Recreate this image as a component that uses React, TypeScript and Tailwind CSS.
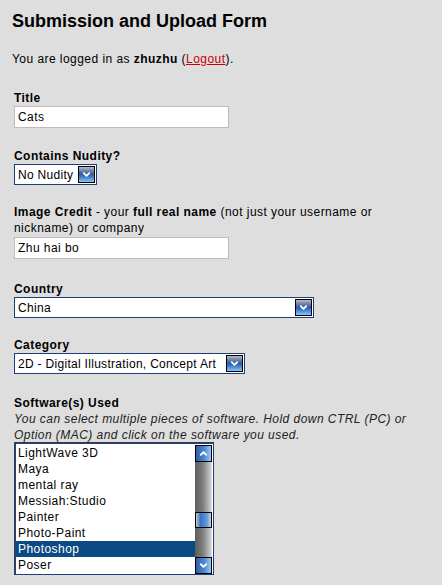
import { ChevronDown, ChevronUp } from 'lucide-react';

const software = [
  'LightWave 3D',
  'Maya',
  'mental ray',
  'Messiah:Studio',
  'Painter',
  'Photo-Paint',
  'Photoshop',
  'Poser',
];

const DropButton = () => (
  <span className="flex h-[17px] w-[17px] shrink-0 items-center justify-center border border-black bg-[linear-gradient(to_bottom,#b4bac8_0%,#7c89a8_22%,#2f5aa6_48%,#3f7ccc_66%,#8cc6f0_100%)]">
    <ChevronDown className="h-[11px] w-[11px] text-white" strokeWidth={4} />
  </span>
);

const Select = ({ value, width }: { value: string; width: string }) => (
  <div className={`flex h-[21px] items-center justify-between gap-[2px] border border-[#1f3d7a] bg-white pl-[3px] pr-[1px] ${width}`}>
    <span className="truncate tracking-[0.3px]">{value}</span>
    <DropButton />
  </div>
);

const TextInput = ({ value }: { value: string }) => (
  <div className="flex h-[22px] w-[215px] items-center border border-[#c4b8bc] bg-white px-[3px]">
    {value}
  </div>
);

const ScrollButton = ({ up }: { up?: boolean }) => (
  <span className="flex h-[17px] w-[17px] items-center justify-center border border-black bg-[linear-gradient(to_right,#2e5fa8,#4d88d2_55%,#9ccbf3)]">
    {up ? (
      <ChevronUp className="h-[11px] w-[11px] text-white" strokeWidth={4} />
    ) : (
      <ChevronDown className="h-[11px] w-[11px] text-white" strokeWidth={4} />
    )}
  </span>
);

const App = () => {
  return (
    <div className="min-h-[585px] w-[442px] bg-[#dedede] pl-[12px] pt-[11px] font-['Liberation_Sans',Arial,sans-serif] text-black">
      <h1 className="text-[18px] font-bold leading-[21px]">Submission and Upload Form</h1>

      <p className="mt-[19px] text-[12px] leading-4 tracking-[0.45px]">
        You are logged in as <b>zhuzhu</b> (
        <a className="text-[#cc0000] underline">Logout</a>).
      </p>

      <div className="mt-[23px] w-[418px] pl-[2px] text-[12px] leading-4 tracking-[0.45px]">
        {/* Title */}
        <div className="font-bold">Title</div>
        <TextInput value="Cats" />

        {/* Nudity */}
        <div className="mt-[20px] font-bold">Contains Nudity?</div>
        <div className="inline-block">
          <Select value="No Nudity" width="w-[83px]" />
        </div>

        {/* Credit */}
        <div className="mt-[19px]">
          <b>Image Credit</b> - your <b>full real name</b> (not just your username or nickname) or company
        </div>
        <div className="mt-[1px]">
          <TextInput value="Zhu hai bo" />
        </div>

        {/* Country */}
        <div className="mt-[22px] font-bold">Country</div>
        <Select value="China" width="w-[300px]" />

        {/* Category */}
        <div className="mt-[19px] font-bold">Category</div>
        <Select value="2D - Digital Illustration, Concept Art" width="w-[231px]" />

        {/* Software */}
        <div className="mt-[21px] font-bold">Software(s) Used</div>
        <div className="italic text-[#222]">
          You can select multiple pieces of software. Hold down CTRL (PC) or Option (MAC) and click on the software you used.
        </div>
        <div className="-mt-[1px] flex h-[133px] w-[200px] border border-[#1f3d7a] bg-white">
          <div className="flex flex-1 border-l border-t border-[#404040]">
            <ul className="flex-1 pt-[1px]">
              {software.map((item) => (
                <li
                  key={item}
                  className={`h-4 pl-[2px] ${item === 'Photoshop' ? 'bg-[#0c4a86] text-white' : ''}`}
                >
                  {item}
                </li>
              ))}
            </ul>
            <div className="mr-[1px] mt-[1px] flex w-[17px] flex-col">
              <ScrollButton up />
              <div className="flex flex-1 flex-col bg-[linear-gradient(to_right,#5e5e5e,#7c7c7c_45%,#bdbdbd_85%,#e4e4e4)]">
                <div className="h-[50px]" />
                <div className="h-[16px] border border-black bg-[linear-gradient(to_right,#c8c8c8,#3a72c4_30%,#5b97dc_70%,#cfcfcf)]" />
              </div>
              <ScrollButton />
            </div>
          </div>
        </div>
      </div>
    </div>
  );
};

export default App;
